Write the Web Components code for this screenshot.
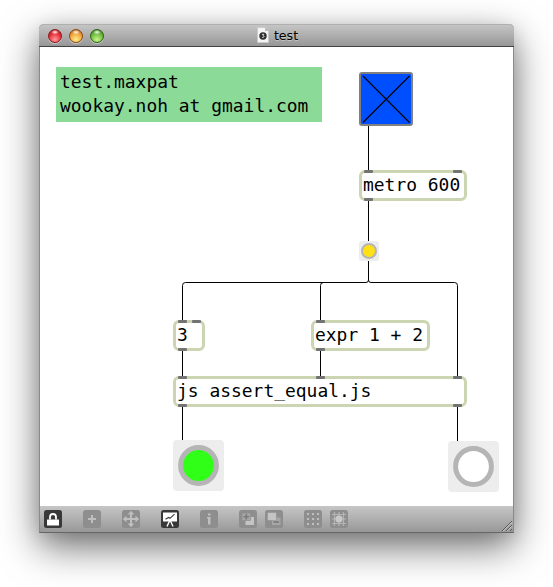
<!DOCTYPE html>
<html lang="en">
<head>
<meta charset="utf-8">
<title>test</title>
<style>
  html, body { margin: 0; background: #fff; }
  body { width: 553px; height: 587px; overflow: hidden; box-sizing: border-box; padding: 24px 39px 54px 39px; }
</style>
</head>
<body>
<patcher-window heading="test">
  <patch-comment style="left:16px;top:20px;width:266px;height:55px">test.maxpat<br>wookay.noh at gmail.com</patch-comment>
  <patch-cords></patch-cords>
  <patch-toggle style="left:319px;top:25px"></patch-toggle>
  <patch-object style="left:319px;top:123px;width:108px" inlets="5,94" outlets="5">metro 600</patch-object>
  <patch-bang style="left:319px;top:194px" size="20" fill="#ffe013" ring="2"></patch-bang>
  <patch-object style="left:133px;top:273px;width:32px" inlets="5,19" outlets="5">3</patch-object>
  <patch-object style="left:271px;top:273px;width:119px" inlets="5" outlets="5">expr 1 + 2</patch-object>
  <patch-object style="left:133px;top:329px;width:294px" inlets="5,143,280" outlets="5,280">js assert_equal.js</patch-object>
  <patch-bang style="left:133px;top:393px" size="51" fill="#30ff18" ring="5"></patch-bang>
  <patch-bang style="left:408px;top:394px" size="51" fill="#ffffff" ring="5"></patch-bang>
  <patcher-toolbar slot="toolbar"></patcher-toolbar>
</patcher-window>

<script>
function mount(el, html) {
  el.attachShadow({ mode: 'open' }).innerHTML = html;
}

customElements.define('window-light', class extends HTMLElement {
  connectedCallback() {
    mount(this, `<style>
      :host{display:block;width:14px;height:14px;border-radius:50%;box-sizing:border-box;
        border:1px solid var(--rim);
        background:radial-gradient(ellipse 4px 2.5px at 50% 18%,rgba(255,255,255,.95),rgba(255,255,255,0) 100%),
          radial-gradient(circle at 50% 80%,var(--glow) 0,var(--mid) 58%,var(--rim) 100%);
        box-shadow:0 1px 0 rgba(255,255,255,.45)}
    </style>`);
  }
});

customElements.define('patcher-window', class extends HTMLElement {
  connectedCallback() {
    mount(this, `<style>
      :host{display:flex;flex-direction:column;width:475px;height:509px;box-sizing:border-box;
        border:1px solid #8a8a8a;border-top:0;border-bottom-color:#666;border-radius:5px 5px 0 0;
        box-shadow:0 14px 38px rgba(0,0,0,.56),0 4px 18px rgba(0,0,0,.10)}
      header{height:23px;box-sizing:border-box;margin:0 -1px;padding:0 9px;border-bottom:1px solid #424242;
        border-radius:5px 5px 0 0;background:linear-gradient(#c7c7c7,#979797);box-shadow:inset 0 1px 0 #b0b0b0;
        display:grid;grid-template-columns:1fr auto 1fr;align-items:start}
      .lights{display:flex;gap:7px;padding-top:5px}
      .title{display:flex;align-items:center;gap:5px;padding:0 0 0 2px;font:12.6px/21px "DejaVu Sans",sans-serif;
        color:#000;text-shadow:0 1px 0 rgba(255,255,255,.35)}
      .title span{padding-top:1px}
      .title svg{display:block}
      main{position:relative;flex:1;background:#fff}
    </style>
    <header>
      <div class="lights">
        <window-light style="--rim:#8d1b20;--mid:#e62a33;--glow:#ff9b9b"></window-light>
        <window-light style="--rim:#8f4a13;--mid:#f0a03a;--glow:#fff08a"></window-light>
        <window-light style="--rim:#2d6512;--mid:#69b83a;--glow:#c8f58c"></window-light>
      </div>
      <div class="title">
        <svg width="12" height="16" viewBox="0 0 12 16"><path d="M.5 .5H8L11.500 4V15.500H.5Z" fill="#f4f4f4" stroke="#c9c9c9" stroke-width=".8"/><path d="M8 .5V4H11.500Z" fill="#bbb"/><circle cx="6" cy="9" r="3.700" fill="#303030"/><path d="M5 7.300h1.800L6 8.700c1.600 0 1.400 2-.9 1.800" fill="none" stroke="#fff" stroke-width=".8"/></svg>
        <span>${this.getAttribute('heading')}</span>
      </div>
    </header>
    <main><slot></slot></main>
    <slot name="toolbar"></slot>`);
  }
});

customElements.define('patch-comment', class extends HTMLElement {
  connectedCallback() {
    mount(this, `<style>
      :host{display:block;position:absolute;box-sizing:border-box;padding:3px 0 0 4px;background:#8cda98;
        font:17.94px/24px "DejaVu Sans Mono",monospace;color:#000;white-space:nowrap}
    </style><slot></slot>`);
  }
});

customElements.define('patch-toggle', class extends HTMLElement {
  connectedCallback() {
    mount(this, `<style>
      :host{display:block;position:absolute;width:54px;height:54px;box-sizing:border-box;
        border:2px solid #808080;border-radius:3px;background:#004fff}
      svg{display:block}
    </style><svg width="50" height="50"><path d="M2 2L48.500 48.500M48.500 2L2 48.500" stroke="#000" stroke-width="1.100"/></svg>`);
  }
});

customElements.define('patch-object', class extends HTMLElement {
  connectedCallback() {
    const ports = (name, edge) => this.getAttribute(name).split(',')
      .map(x => `<i style="left:${x}px;${edge}:0"></i>`).join('');
    mount(this, `<style>
      :host{display:block;position:absolute;height:31px;box-sizing:border-box}
      div{height:100%;box-sizing:border-box;border:3px solid #ccd5b1;border-radius:6px;background:#fff;padding-left:1px;
        font:17.94px/24px "DejaVu Sans Mono",monospace;color:#000;white-space:nowrap}
      i{position:absolute;width:9px;height:3px;border-radius:1px;background:#737373}
    </style><div><slot></slot></div>${ports('inlets', 'top')}${ports('outlets', 'bottom')}`);
  }
});

customElements.define('patch-bang', class extends HTMLElement {
  connectedCallback() {
    const s = +this.getAttribute('size'), w = +this.getAttribute('ring'), c = s / 2, r = s * .4 - w / 2;
    mount(this, `<style>
      :host{display:block;position:absolute;width:${s}px;height:${s}px;border-radius:${s > 30 ? 4 : 3}px;background:#ededed}
      svg{display:block}
    </style><svg width="${s}" height="${s}"><circle cx="${c}" cy="${c}" r="${r}" fill="${this.getAttribute('fill')}" stroke="#b5b5b5" stroke-width="${w}"/></svg>`);
  }
});

customElements.define('patch-cords', class extends HTMLElement {
  connectedCallback() {
    mount(this, `<style>
      :host{display:block;position:absolute;inset:0}
      svg{display:block}
    </style><svg width="473" height="459" fill="none" stroke="#000" stroke-width="1">
      <path d="M328.500 79V124M328.500 153V195M328.500 213V233Q328.500 235.500 326 235.500H145.500Q142.500 235.500 142.500 238.500V274"/>
      <path d="M328.500 233Q328.500 235.500 331 235.500H414.500Q417.500 235.500 417.500 238.500V330M283.500 235.500Q280.500 235.500 280.500 238.500V274"/>
      <path d="M142.500 303V330M280.500 303V330M142.500 359V394M417.500 359V395"/>
    </svg>`);
  }
});

const GLYPHS = {
  lock: '<path d="M6 9.500V7a3 3 0 0 1 6 0V9.500" fill="none" stroke="currentColor" stroke-width="1.800"/><rect x="3" y="9.500" width="12" height="6" rx=".5" fill="currentColor"/>',
  add: '<path d="M9 5V13M5 9H13" stroke="currentColor" stroke-width="2"/>',
  move: '<path d="M9 3V15M3 9H15" stroke="currentColor" stroke-width="2"/><path d="M9 .8L12.300 4.500H5.700ZM9 17.200L12.300 13.500H5.700ZM.8 9L4.500 5.700V12.300ZM17.200 9L13.500 5.700V12.300Z" fill="currentColor"/>',
  present: '<path d="M2 2.500H16V11.500H2Z" fill="currentColor"/><path d="M8.500 11L6 16.500M9.500 11L12 16.500" stroke="currentColor" stroke-width="1.400"/><path d="M4.500 9.300L7.500 7.500L9 8.300L13.500 4.200" fill="none" stroke="#383838" stroke-width="1.100"/>',
  info: '<path d="M8 3.500H10.500V5.500H8ZM7 7H10.500V14.500H8V8.500H7Z" fill="currentColor"/>',
  front: '<rect x="6.500" y="7" width="8.500" height="8" fill="#c4c4c4"/><rect x="3" y="3" width="8.500" height="7.500" fill="#a6a6a6" stroke="#8e8e8e" stroke-width=".7"/><path d="M7.300 4V9.500M4.500 6.700H10" stroke="#7a7a7a" stroke-width="1.600"/>',
  back: '<rect x="7" y="7.500" width="8.500" height="7.500" fill="#a6a6a6"/><path d="M8.500 12H14" stroke="#7a7a7a" stroke-width="1.600"/><rect x="2.500" y="2.500" width="8.800" height="8" fill="#c4c4c4" stroke="#8e8e8e" stroke-width=".5"/>',
  grid: [4, 9, 14].map(y => [4, 9, 14].map(x => `<rect x="${x - 1}" y="${y - 1}" width="2" height="2" fill="currentColor"/>`).join('')).join(''),
  snap: '<path d="M4.500 2V16M9 2V16M13.500 2V16M2 4.500H16M2 9H16M2 13.500H16" stroke="#b4b4b4" stroke-width="1.200"/><circle cx="9" cy="9" r="3.600" fill="#c8c8c8"/>'
};

customElements.define('tool-button', class extends HTMLElement {
  connectedCallback() {
    mount(this, `<style>
      :host{display:block;width:18px;height:18px;border-radius:2.5px;background:#8e8e8e;color:#bfbfbf}
      :host([active]){background:#383838;color:#fff}
      svg{display:block}
    </style><svg width="18" height="18">${GLYPHS[this.getAttribute('glyph')]}</svg>`);
  }
});

customElements.define('patcher-toolbar', class extends HTMLElement {
  connectedCallback() {
    mount(this, `<style>
      :host{display:flex;align-items:flex-start;gap:21px;height:26px;box-sizing:border-box;padding:4px 0 0 4px;
        background:linear-gradient(#c6c6c6,#989898)}
      .pair{display:flex;gap:8px}
      .grip{margin:10px 0 0 auto;display:block}
    </style>
    <tool-button glyph="lock" active></tool-button>
    <tool-button glyph="add"></tool-button>
    <tool-button glyph="move"></tool-button>
    <tool-button glyph="present" active></tool-button>
    <tool-button glyph="info"></tool-button>
    <div class="pair"><tool-button glyph="front"></tool-button><tool-button glyph="back"></tool-button></div>
    <div class="pair"><tool-button glyph="grid"></tool-button><tool-button glyph="snap"></tool-button></div>
    <svg class="grip" width="12" height="12"><path d="M1 11L11 1M5 11L11 5M9 11L11 9" stroke="#585858"/><path d="M2.200 11L11 2.200M6.200 11L11 6.200" stroke="#d0d0d0" stroke-width=".8"/></svg>`);
  }
});
</script>
</body>
</html>
